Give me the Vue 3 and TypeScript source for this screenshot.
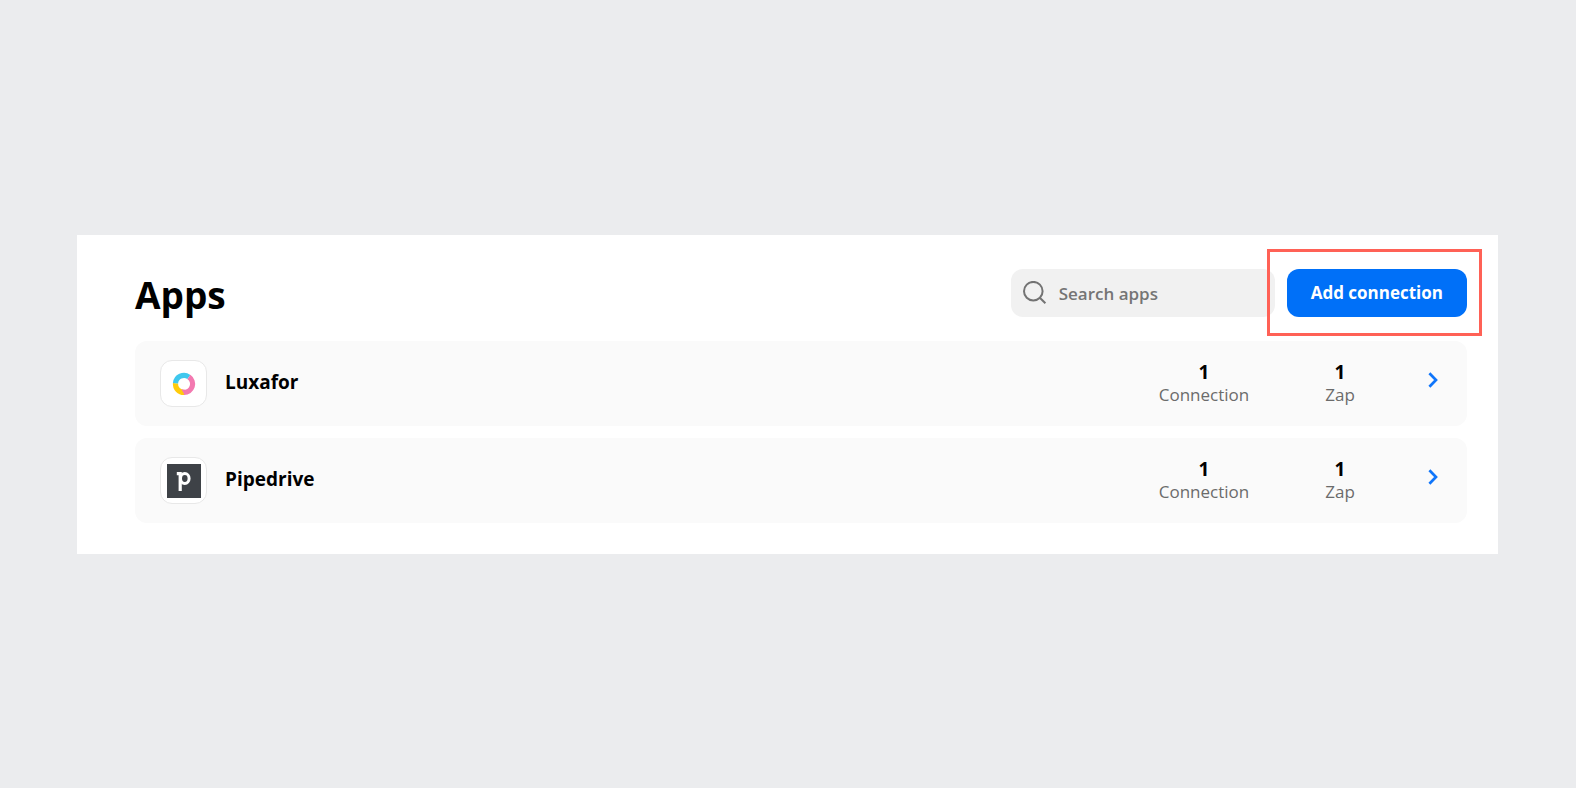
<script setup lang="ts">
import { ref, computed } from 'vue'

interface AppEntry {
  id: string
  name: string
  connections: number
  zaps: number
}

const apps: AppEntry[] = [
  { id: 'luxafor', name: 'Luxafor', connections: 1, zaps: 1 },
  { id: 'pipedrive', name: 'Pipedrive', connections: 1, zaps: 1 },
]

const query = ref('')
const visibleApps = computed(() =>
  apps.filter((app) => app.name.toLowerCase().includes(query.value.trim().toLowerCase())),
)
const plural = (count: number, word: string): string => (count === 1 ? word : word + 's')
</script>

<template>
  <div class="page">
    <main class="panel">
      <header class="header">
        <h1 class="title">Apps</h1>
        <label class="search">
          <svg class="search-icon" viewBox="0 0 24 24" aria-hidden="true">
            <circle cx="10.3" cy="10.2" r="9.3" />
            <path d="M16.8 16.7 22.4 22.3" />
          </svg>
          <input v-model="query" class="search-input" type="search" placeholder="Search apps" aria-label="Search apps" />
        </label>
        <div class="action">
          <button class="add-button" type="button">Add connection</button>
          <span class="highlight" aria-hidden="true"></span>
        </div>
      </header>

      <ul class="list">
        <li v-for="app in visibleApps" :key="app.id">
          <a class="row" :href="'#' + app.id">
            <span class="logo">
              <svg v-if="app.id === 'luxafor'" class="logo-art" viewBox="0 0 34 34" aria-hidden="true">
                <g fill="none" stroke-width="5.2">
                  <path d="M17.4 25.5A8.5 8.5 0 0 1 8.5 16.2" stroke="#ffcb0c" />
                  <path d="M8.5 16.2A8.5 8.5 0 0 1 21.9 10" stroke="#3fc8ee" />
                  <path d="M21.9 10A8.5 8.5 0 0 1 17 25.5" stroke="#f379b0" />
                </g>
                <path d="M17.6 28.1 14.4 22.2 18 22.8Z" fill="#f379b0" />
              </svg>
              <svg v-else class="logo-art" viewBox="0 0 34 34" aria-hidden="true">
                <rect width="34" height="34" fill="#3e4247" />
                <g fill="none" stroke="#fff">
                  <path d="M9.8 9.7H13.2V27" stroke-width="3.2" />
                  <ellipse cx="17.8" cy="14.5" rx="4.3" ry="4.9" stroke-width="3" />
                </g>
              </svg>
            </span>
            <span class="name">{{ app.name }}</span>
            <span class="stat">
              <strong class="count">{{ app.connections }}</strong>
              <span class="unit">{{ plural(app.connections, 'Connection') }}</span>
            </span>
            <span class="stat">
              <strong class="count">{{ app.zaps }}</strong>
              <span class="unit">{{ plural(app.zaps, 'Zap') }}</span>
            </span>
            <svg class="chevron" viewBox="0 0 20 20" aria-hidden="true">
              <path d="M6.4 3.2 13 10 6.4 16.8" />
            </svg>
          </a>
        </li>
      </ul>
    </main>
  </div>
</template>

<style>
body {
  margin: 0;
  background: #ebecee;
}
</style>

<style scoped>
.page {
  box-sizing: border-box;
  min-height: 100vh;
  padding: 235px 78px 234px 77px;
  background: #ebecee;
  font-family: 'Open Sans', 'Noto Sans', sans-serif;
  color: #000;
}

.panel {
  padding: 34px 31px 31px 58px;
  background: #fff;
}

.header {
  display: flex;
  align-items: center;
  gap: 12px;
  margin-bottom: 24px;
}

.title {
  flex: 1;
  margin: 0;
  padding-top: 4px;
  font-size: 37px;
  font-weight: 700;
  line-height: 44px;
}

.search {
  display: flex;
  align-items: center;
  gap: 12px;
  box-sizing: border-box;
  width: 264px;
  height: 48px;
  padding: 0 12px;
  border-radius: 12px;
  background: #f1f1f1;
}

.search-icon {
  flex: none;
  width: 24px;
  height: 24px;
  fill: none;
  stroke: #737373;
  stroke-width: 2;
}

.search-input {
  flex: 1;
  min-width: 0;
  padding: 2px 0 0;
  border: 0;
  outline: 0;
  background: transparent;
  color: #000;
  font: 600 17px/24px 'Open Sans', 'Noto Sans', sans-serif;
  appearance: none;
}

.search-input::placeholder {
  color: #757575;
  opacity: 1;
}

.action {
  position: relative;
}

.add-button {
  display: block;
  height: 48px;
  min-width: 180px;
  padding: 0 24px;
  border: 0;
  border-radius: 12px;
  background: #0070f8;
  color: #fff;
  font: 700 17px/24px 'Open Sans', 'Noto Sans', sans-serif;
  white-space: nowrap;
  cursor: pointer;
}

.highlight {
  position: absolute;
  inset: -20px -15px -19px -20px;
  border: 3px solid #ff6156;
  pointer-events: none;
}

.list {
  display: flex;
  flex-direction: column;
  gap: 12px;
  margin: 0;
  padding: 0;
  list-style: none;
}

.row {
  display: flex;
  align-items: center;
  box-sizing: border-box;
  min-height: 85px;
  padding: 0 24px 0 25px;
  border-radius: 12px;
  background: #fafafa;
  color: inherit;
  text-decoration: none;
}

.logo {
  display: flex;
  align-items: center;
  justify-content: center;
  box-sizing: border-box;
  width: 47px;
  height: 47px;
  border: 1px solid #e8e8e8;
  border-radius: 12px;
  background: #fff;
}

.logo-art {
  width: 34px;
  height: 34px;
}

.name {
  flex: 1;
  padding: 0 0 4px 18px;
  font-size: 19px;
  font-weight: 700;
  line-height: 28px;
}

.stat {
  display: flex;
  flex-direction: column;
  align-items: center;
  width: 136px;
}

.count {
  font-size: 19px;
  font-weight: 700;
  line-height: 24px;
}

.unit {
  padding-bottom: 1px;
  color: #6b6b6b;
  font-size: 17px;
  line-height: 22px;
}

.chevron {
  width: 20px;
  height: 20px;
  margin-left: 15px;
  padding-bottom: 8px;
  fill: none;
  stroke: #0f75fa;
  stroke-width: 2.7;
}
</style>
